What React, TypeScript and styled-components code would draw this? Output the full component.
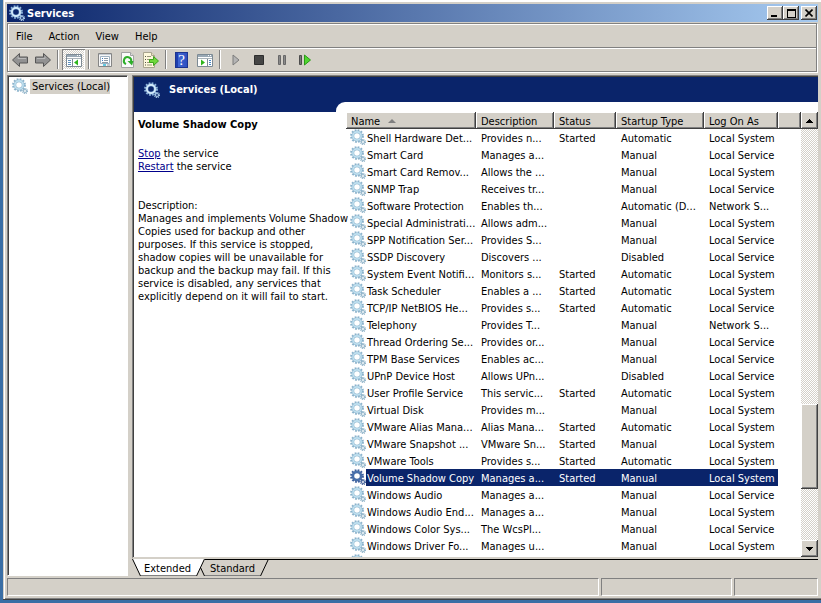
import React from "react";
import styled, { createGlobalStyle, css } from "styled-components";

const face = "#d4d0c8";
const shade = "#808080";
const dark = "#404040";
const navy = "#0a246a";

const GlobalStyle = createGlobalStyle`
  *, *::before, *::after { box-sizing: border-box; }
  body {
    margin: 0;
    background: #3a6ea5;
    font: 11px/13px "DejaVu Sans Condensed", Tahoma, "Noto Sans", sans-serif;
    color: #000;
  }
  button { font: inherit; color: inherit; padding: 0; border: 0; background: none; }
  svg { display: block; flex: none; }
`;

const raised = css`
  background: ${face};
  box-shadow: inset -1px -1px ${dark}, inset 1px 1px #fff, inset -2px -2px ${shade};
`;

const Desktop = styled.div`
  display: flex;
  height: 100vh;
  padding: 0 0 3px 3px;
`;

const Window = styled.main`
  flex: 1;
  min-width: 0;
  display: flex;
  flex-direction: column;
  padding: 4px 3px 3px 4px;
  background: ${face};
  border-bottom: 1px solid ${dark};
  box-shadow: inset 1px 0 ${face}, inset 2px 2px #fff, inset 0 -1px ${shade};
`;

const TitleBar = styled.header`
  display: flex;
  align-items: center;
  height: 18px;
  padding: 0 1px 0 2px;
  background: linear-gradient(to right, ${navy}, #a6caf0);
`;

const WindowTitle = styled.h1`
  flex: 1;
  margin: 0 0 0 2px;
  font-size: 11px;
  color: #fff;
`;

const CaptionButton = styled.button<{ $apart?: boolean }>`
  ${raised}
  width: 16px;
  height: 14px;
  margin-left: ${(p) => (p.$apart ? 2 : 0)}px;
  display: grid;
  place-items: center;
`;

const Bands = styled.div`
  margin-top: 1px;
  margin-right: 1px;
  border: 1px solid ${shade};
  box-shadow: 1px 1px #fff;
`;

const MenuBar = styled.nav`
  display: flex;
  align-items: center;
  gap: 16px;
  height: 24px;
  padding: 1px 0 0 8px;
  border-bottom: 1px solid ${shade};
  box-shadow: inset 1px 1px #fff;
`;

const ToolBar = styled.div`
  display: flex;
  align-items: center;
  height: 23px;
  box-shadow: inset 1px 1px #fff;
`;

const ToolButton = styled.button<{ $pressed?: boolean }>`
  width: 23px;
  height: 21px;
  display: grid;
  place-items: center;
  ${(p) =>
    p.$pressed &&
    css`
      background: repeating-conic-gradient(#fff 0 25%, ${face} 0 50%) 0 0 / 2px 2px;
      box-shadow: inset 1px 1px ${shade}, inset -1px -1px #fff;
    `}
`;

const Divider = styled.span`
  width: 2px;
  height: 19px;
  margin: 0 3px;
  border-left: 1px solid ${shade};
  border-right: 1px solid #fff;
`;

const Workspace = styled.div`
  flex: 1;
  min-height: 0;
  display: flex;
  gap: 4px;
  margin-top: 3px;
`;

const TreePane = styled.aside`
  width: 121px;
  flex: none;
  padding: 2px 0 0 4px;
  border: 1px solid;
  border-color: ${shade} #fff #fff ${shade};
  box-shadow: inset 1px 1px ${dark};
  background: #fff;
`;

const TreeItem = styled.button`
  display: flex;
  align-items: center;
  gap: 2px;
`;

const TreeLabel = styled.span`
  padding: 1px 0 1px 2px;
  background: ${face};
  white-space: nowrap;
`;

const RightPane = styled.section`
  flex: 1;
  min-width: 0;
  display: flex;
  flex-direction: column;
`;

const Snapin = styled.div`
  border: solid;
  border-width: 1px 0 2px 1px;
  border-color: ${shade} #fff ${face} ${shade};
  flex: 1;
  min-height: 0;
  display: flex;
  flex-direction: column;
  padding: 1px 0 0 1px;
  background: #fff;
  box-shadow: inset 1px 1px ${dark};
`;

const Banner = styled.div`
  display: flex;
  align-items: center;
  gap: 9px;
  height: 25px;
  flex: none;
  padding-left: 10px;
  background: ${navy};
  color: #fff;
`;

const BannerTitle = styled.h2`
  margin: 0;
  font-size: 11px;
`;

const BannerEdge = styled.div`
  height: 10px;
  flex: none;
  padding-left: 202px;
  background: ${navy};

  &::before {
    content: "";
    display: block;
    height: 100%;
    background: #fff;
    border-top-left-radius: 9px;
  }
`;

const Content = styled.div`
  flex: 1;
  min-height: 0;
  display: flex;
`;

const Details = styled.div`
  width: 212px;
  flex: none;
  padding: 6px 0 0 4px;
  white-space: nowrap;
`;

const DetailsTitle = styled.h3`
  margin: 0 0 16px;
  font-size: 11px;
`;

const Paragraph = styled.p`
  margin: 0 0 26px;
`;

const ActionLink = styled.a`
  color: #00008b;
  text-decoration: underline;
`;

const ListView = styled.div`
  flex: 1;
  min-width: 0;
  overflow: hidden;
`;

const Table = styled.table`
  width: 100%;
  table-layout: fixed;
  border-collapse: collapse;
`;

const Column = styled.col<{ $width?: number }>`
  width: ${(p) => (p.$width ? `${p.$width}px` : "auto")};
`;

const HeadCell = styled.th`
  ${raised}
  height: 17px;
  padding: 1px 5px 0;
  font-weight: normal;
  text-align: left;
  white-space: nowrap;
`;

const HeadLabel = styled.span`
  display: flex;
  align-items: center;
  gap: 8px;
`;

const Cell = styled.td`
  height: 17px;
  padding: 2px 5px 0;
  white-space: nowrap;
`;

const NameCell = styled.th`
  height: 17px;
  padding: 0 0 0 4px;
  font-weight: normal;
  text-align: left;
  white-space: nowrap;
`;

const NameLayout = styled.span`
  display: flex;
  height: 17px;
`;

const NameText = styled.span`
  flex: 1;
  min-width: 0;
  padding: 3px 0 0 1px;
`;

const Row = styled.tr<{ $selected?: boolean }>`
  ${(p) =>
    p.$selected &&
    css`
      color: #fff;
      ${Cell}:not(:last-child), ${NameText} {
        background: ${navy};
      }
    `}
`;

const ScrollBar = styled.div`
  width: 17px;
  flex: none;
  display: flex;
  flex-direction: column;
  background: repeating-conic-gradient(#fff 0 25%, ${face} 0 50%) 0 0 / 2px 2px;
`;

const ScrollButton = styled.button`
  ${raised}
  height: 17px;
  display: grid;
  place-items: center;
`;

const TrackPart = styled.div<{ $share: number }>`
  flex: ${(p) => p.$share} 1 0;
`;

const Thumb = styled(TrackPart)`
  ${raised}
`;

const Tabs = styled.div`
  display: flex;
  height: 17px;
`;

const Tab = styled.button<{ $active?: boolean }>`
  height: 17px;
  padding: 1px 5px 0 ${(p) => (p.$active ? 3 : 5)}px;
  border-top: 1px solid ${(p) => (p.$active ? "#fff" : "#000")};
  border-bottom: 1px solid ${shade};
  background: ${(p) => (p.$active ? "#fff" : face)};
`;

const TabRest = styled.div`
  flex: 1;
  border-top: 1px solid #000;
`;

const StatusBar = styled.footer`
  display: flex;
  gap: 2px;
  margin-top: 2px;
`;

const StatusCell = styled.div<{ $width?: number }>`
  flex: ${(p) => (p.$width ? `0 0 ${p.$width}px` : "1")};
  height: 18px;
  border: 1px solid;
  border-color: ${shade} #fff #fff ${shade};
`;

type GearTone = "light" | "title" | "selected";

const gearTones: Record<GearTone, { edge: string; body: string; small: string }> = {
  light: { edge: "#8bb3cc", body: "#bfe0f0", small: "#94b6ca" },
  title: { edge: "#8fb6dc", body: "#d5ebfa", small: "#a9cae8" },
  selected: { edge: "#3c5f9c", body: "#4a72ad", small: "#46659c" },
};

function Gear({ tone = "light" }: { tone?: GearTone }) {
  const c = gearTones[tone];
  return (
    <svg width="16" height="16" viewBox="0 0 16 16" fill="none" aria-hidden="true">
      <circle cx="7" cy="7" r="5.9" stroke={c.edge} strokeWidth="2" strokeDasharray="1.75 1.339" />
      <circle cx="7" cy="7" r="4.1" stroke={c.edge} strokeWidth="2.6" />
      <circle cx="7" cy="7" r="4.1" stroke={c.body} strokeWidth="1.6" />
      <circle cx="13" cy="13" r="2.5" stroke={c.small} strokeWidth="1.2" strokeDasharray="1.1 0.863" />
      <circle cx="13" cy="13" r="1.5" stroke={c.small} strokeWidth="1.2" />
    </svg>
  );
}

function Arrow({ forward }: { forward?: boolean }) {
  return (
    <svg width="16" height="16" viewBox="0 0 16 16" aria-hidden="true">
      <path
        d={
          forward
            ? "M15.5 8 8.5 1.5v3.5h-8v6h8v3.5z"
            : "M.5 8l7-6.5v3.5h8v6h-8v3.5z"
        }
        fill="#929292"
        stroke="#565656"
        strokeLinejoin="round"
      />
      <path d={forward ? "M2 6.500h8v-2" : "M14 6.500H6v-2"} fill="none" stroke="#b9b9b9" />
    </svg>
  );
}

function ConsoleIcon({ play }: { play?: boolean }) {
  return (
    <svg width="16" height="16" viewBox="0 0 16 16" aria-hidden="true">
      <path d="M.5 2.500h15v12H.5z" fill="#fff" stroke="#7d8a94" />
      <path d="M1 3h14v2H1z" fill="#9aa9b5" />
      <path d="M11 3h1v1h-1zM13 3h1v1h-1z" fill="#fff" />
      <path d="M1 6.500h14" stroke="#a9b3ba" />
      {play ? (
        <>
          <path d="M10.500 7v7" stroke="#7d8a94" />
          <path d="M4 7.500v6l4-3z" fill="#2fb51c" />
          <path d="M12 8.500h2M12 10.500h2M12 12.500h2" stroke="#4486c6" />
        </>
      ) : (
        <>
          <path d="M6.500 7v7" stroke="#7d8a94" />
          <path d="M12 7.500v6l-4-3z" fill="#2fb51c" />
          <path d="M2 8.500h3M2 10.500h3M2 12.500h3" stroke="#5b8fbd" />
        </>
      )}
    </svg>
  );
}

function PropertiesIcon() {
  return (
    <svg width="16" height="16" viewBox="0 0 16 16" aria-hidden="true">
      <path d="M1.500 1.500h13v13h-13z" fill="#f6f6f6" stroke="#858585" />
      <path d="M2 2.500h12" stroke="#c3cbd2" />
      <path d="M3.500 4.500h9v7h-9z" fill="#fff" stroke="#9fb2c2" />
      <path d="M5 6.500h1M5 8.500h1" stroke="#3a78c0" />
      <path d="M7 6.500h4M7 8.500h4M5 10.500h6" stroke="#8b9aa6" />
      <path d="M6 13h3" stroke="#30b8d8" strokeWidth="1.500" />
      <path d="M10 13h3" stroke="#b0b8be" strokeWidth="1.500" />
    </svg>
  );
}

function RefreshIcon() {
  return (
    <svg width="16" height="16" viewBox="0 0 16 16" aria-hidden="true">
      <path d="M1.500.5h9l3 3v12h-12z" fill="#fafafa" stroke="#a2a2a2" />
      <path d="M10.500.5v3h3" fill="#ddd" stroke="#a2a2a2" />
      <path d="M6 12.200A3.700 3.700 0 1 1 11.200 9.500" fill="none" stroke="#2fae2a" strokeWidth="2" />
      <path d="M7.500 9h6l-1.500 4.500z" fill="#2fae2a" />
    </svg>
  );
}

function ExportIcon() {
  return (
    <svg width="16" height="16" viewBox="0 0 16 16" aria-hidden="true">
      <path d="M.5.5h8l3 3v12H.5z" fill="#fdf8dc" stroke="#a8a48f" />
      <path d="M8.500.5v3h3" fill="#e8e2c0" stroke="#a8a48f" />
      <path d="M2 4.500h1M2 7.500h1M2 10.500h1M2 13h1" stroke="#55554a" />
      <path d="M4 4.500h4M4 7.500h4M4 10.500h3M4 13h5" stroke="#9a967c" />
      <path d="M6.500 7.500h4v-3l5 4.500-5 4.500v-3h-4z" fill="#6fd83c" stroke="#3da51f" />
    </svg>
  );
}

const HelpGlyph = styled.span`
  width: 13px;
  height: 16px;
  border: 1px solid #1c3490;
  background: linear-gradient(to right, #1f3fae 2px, #3f66d4 2px, #2f50c0);
  color: #fff;
  font: 15px/15px "Liberation Serif", serif;
  text-align: center;
`;

function PlayIcon() {
  return (
    <svg width="8" height="12" viewBox="0 0 8 12" aria-hidden="true">
      <path d="M1 1v10l6-5z" fill="#b4b4b4" stroke="#7c7c7c" />
    </svg>
  );
}

function StopIcon() {
  return (
    <svg width="10" height="10" viewBox="0 0 10 10" aria-hidden="true">
      <path d="M.5.5h9v9h-9z" fill="#454545" stroke="#2e2e2e" />
    </svg>
  );
}

function PauseIcon() {
  return (
    <svg width="8" height="10" viewBox="0 0 8 10" aria-hidden="true">
      <path d="M.5.5h2v9h-2zM5.500.5h2v9h-2z" fill="#8a8a8a" stroke="#686868" />
    </svg>
  );
}

function RestartIcon() {
  return (
    <svg width="12" height="12" viewBox="0 0 12 12" aria-hidden="true">
      <path d="M.5 1.500h2v9h-2z" fill="#777" stroke="#4d4d4d" />
      <path d="M5.500 1v10l6-5z" fill="#4fd52f" stroke="#2b9a18" />
    </svg>
  );
}

function Triangle({ down }: { down?: boolean }) {
  return (
    <svg width="7" height="4" viewBox="0 0 7 4" aria-hidden="true">
      <path d={down ? "M0 0h7v1H0zM1 1h5v1H1zM2 2h3v1H2zM3 3h1v1H3z" : "M3 0h1v1H3zM2 1h3v1H2zM1 2h5v1H1zM0 3h7v1H0z"} />
    </svg>
  );
}

function SortMark() {
  return (
    <svg width="8" height="4" viewBox="0 0 8 4" aria-hidden="true">
      <path d="M0 4h8L4 0z" fill={shade} />
    </svg>
  );
}

type Service = [name: string, description: string, status: string, startup: string, account: string];

const services: Service[] = [
  ["Shell Hardware Det...", "Provides n...", "Started", "Automatic", "Local System"],
  ["Smart Card", "Manages a...", "", "Manual", "Local Service"],
  ["Smart Card Remov...", "Allows the ...", "", "Manual", "Local System"],
  ["SNMP Trap", "Receives tr...", "", "Manual", "Local Service"],
  ["Software Protection", "Enables th...", "", "Automatic (D...", "Network S..."],
  ["Special Administrati...", "Allows adm...", "", "Manual", "Local System"],
  ["SPP Notification Ser...", "Provides S...", "", "Manual", "Local Service"],
  ["SSDP Discovery", "Discovers ...", "", "Disabled", "Local Service"],
  ["System Event Notifi...", "Monitors s...", "Started", "Automatic", "Local System"],
  ["Task Scheduler", "Enables a ...", "Started", "Automatic", "Local System"],
  ["TCP/IP NetBIOS He...", "Provides s...", "Started", "Automatic", "Local Service"],
  ["Telephony", "Provides T...", "", "Manual", "Network S..."],
  ["Thread Ordering Se...", "Provides or...", "", "Manual", "Local Service"],
  ["TPM Base Services", "Enables ac...", "", "Manual", "Local Service"],
  ["UPnP Device Host", "Allows UPn...", "", "Disabled", "Local Service"],
  ["User Profile Service", "This servic...", "Started", "Automatic", "Local System"],
  ["Virtual Disk", "Provides m...", "", "Manual", "Local System"],
  ["VMware Alias Mana...", "Alias Mana...", "Started", "Automatic", "Local System"],
  ["VMware Snapshot ...", "VMware Sn...", "Started", "Manual", "Local System"],
  ["VMware Tools", "Provides s...", "Started", "Automatic", "Local System"],
  ["Volume Shadow Copy", "Manages a...", "Started", "Manual", "Local System"],
  ["Windows Audio", "Manages a...", "", "Manual", "Local Service"],
  ["Windows Audio End...", "Manages a...", "", "Manual", "Local System"],
  ["Windows Color Sys...", "The WcsPl...", "", "Manual", "Local Service"],
  ["Windows Driver Fo...", "Manages u...", "", "Manual", "Local System"],
  ["", "", "", "", ""],
];

const columns = [
  { title: "Name", width: 130 },
  { title: "Description", width: 78 },
  { title: "Status", width: 62 },
  { title: "Startup Type", width: 88 },
  { title: "Log On As", width: 74 },
  { title: "" },
];

export default function App() {
  const [selected, setSelected] = React.useState("Volume Shadow Copy");
  return (
    <>
      <GlobalStyle />
      <Desktop>
        <Window>
          <TitleBar>
            <Gear tone="title" />
            <WindowTitle>Services</WindowTitle>
            <CaptionButton aria-label="Minimize">
              <svg width="8" height="8" viewBox="0 0 8 8"><path d="M0 6h6v2H0z" /></svg>
            </CaptionButton>
            <CaptionButton aria-label="Maximize">
              <svg width="9" height="9" viewBox="0 0 9 9"><path d="M0 0h9v9H0zM1 2v6h7V2z" fillRule="evenodd" /></svg>
            </CaptionButton>
            <CaptionButton aria-label="Close" $apart>
              <svg width="8" height="8" viewBox="0 0 8 8"><path d="M.5.5l7 7M7.500.5l-7 7" stroke="#000" strokeWidth="1.600" /></svg>
            </CaptionButton>
          </TitleBar>

          <Bands>
            <MenuBar aria-label="Menu">
              <button>File</button>
              <button>Action</button>
              <button>View</button>
              <button>Help</button>
            </MenuBar>
            <ToolBar role="toolbar" aria-label="Tools">
              <ToolButton aria-label="Back"><Arrow /></ToolButton>
              <ToolButton aria-label="Forward"><Arrow forward /></ToolButton>
              <Divider />
              <ToolButton aria-label="Show console tree" aria-pressed="true" $pressed><ConsoleIcon /></ToolButton>
              <Divider />
              <ToolButton aria-label="Properties"><PropertiesIcon /></ToolButton>
              <ToolButton aria-label="Refresh"><RefreshIcon /></ToolButton>
              <ToolButton aria-label="Export list"><ExportIcon /></ToolButton>
              <Divider />
              <ToolButton aria-label="Help"><HelpGlyph>?</HelpGlyph></ToolButton>
              <ToolButton aria-label="Show action pane"><ConsoleIcon play /></ToolButton>
              <Divider />
              <ToolButton aria-label="Start service"><PlayIcon /></ToolButton>
              <ToolButton aria-label="Stop service"><StopIcon /></ToolButton>
              <ToolButton aria-label="Pause service"><PauseIcon /></ToolButton>
              <ToolButton aria-label="Restart service"><RestartIcon /></ToolButton>
            </ToolBar>
          </Bands>

          <Workspace>
            <TreePane>
              <TreeItem>
                <Gear />
                <TreeLabel>Services (Local)</TreeLabel>
              </TreeItem>
            </TreePane>
            <RightPane>
              <Snapin>
                <Banner>
                  <Gear tone="title" />
                  <BannerTitle>Services (Local)</BannerTitle>
                </Banner>
                <BannerEdge />
                <Content>
                  <Details>
                    <DetailsTitle>Volume Shadow Copy</DetailsTitle>
                    <Paragraph>
                      <ActionLink href="#stop">Stop</ActionLink> the service
                      <br />
                      <ActionLink href="#restart">Restart</ActionLink> the service
                    </Paragraph>
                    <Paragraph>
                      Description:
                      <br />
                      Manages and implements Volume Shadow
                      <br />
                      Copies used for backup and other
                      <br />
                      purposes. If this service is stopped,
                      <br />
                      shadow copies will be unavailable for
                      <br />
                      backup and the backup may fail. If this
                      <br />
                      service is disabled, any services that
                      <br />
                      explicitly depend on it will fail to start.
                    </Paragraph>
                  </Details>
                  <ListView>
                    <Table>
                      <colgroup>
                        {columns.map((c) => (
                          <Column key={c.title} $width={c.width} />
                        ))}
                      </colgroup>
                      <thead>
                        <tr>
                          {columns.map((c) => (
                            <HeadCell key={c.title} scope="col">
                              <HeadLabel>
                                {c.title}
                                {c.title === "Name" && <SortMark />}
                              </HeadLabel>
                            </HeadCell>
                          ))}
                        </tr>
                      </thead>
                      <tbody>
                        {services.map(([name, ...rest]) => {
                          const active = name === selected;
                          return (
                            <Row key={name} $selected={active} onClick={() => setSelected(name)}>
                              <NameCell scope="row">
                                <NameLayout>
                                  <Gear tone={active ? "selected" : "light"} />
                                  <NameText>{name}</NameText>
                                </NameLayout>
                              </NameCell>
                              {rest.map((text, i) => (
                                <Cell key={i}>{text}</Cell>
                              ))}
                              <Cell />
                            </Row>
                          );
                        })}
                      </tbody>
                    </Table>
                  </ListView>
                  <ScrollBar>
                    <ScrollButton aria-label="Scroll up"><Triangle /></ScrollButton>
                    <TrackPart $share={276} />
                    <Thumb $share={85} />
                    <TrackPart $share={51} />
                    <ScrollButton aria-label="Scroll down"><Triangle down /></ScrollButton>
                  </ScrollBar>
                </Content>
              </Snapin>
              <Tabs role="tablist">
                <svg width="9" height="17" viewBox="0 0 9 17" aria-hidden="true">
                  <path d="M.5 0 8.500 17H9V0z" fill="#fff" />
                  <path d="M.5 0 8.500 17" stroke="#000" />
                </svg>
                <Tab role="tab" aria-selected="true" $active>Extended</Tab>
                <svg width="9" height="17" viewBox="0 0 9 17" aria-hidden="true">
                  <path d="M0 0h8.500L.5 17H0z" fill="#fff" />
                  <path d="M8.500 0 .5 17M4.500 8.500l4 8.500" stroke="#000" fill="none" />
                </svg>
                <Tab role="tab" aria-selected="false">Standard</Tab>
                <svg width="9" height="17" viewBox="0 0 9 17" aria-hidden="true">
                  <path d="M0 .5h9M8.500 0 .5 17" stroke="#000" fill="none" />
                </svg>
                <TabRest />
              </Tabs>
            </RightPane>
          </Workspace>

          <StatusBar>
            <StatusCell />
            <StatusCell $width={131} />
            <StatusCell $width={84} />
          </StatusBar>
        </Window>
      </Desktop>
    </>
  );
}
